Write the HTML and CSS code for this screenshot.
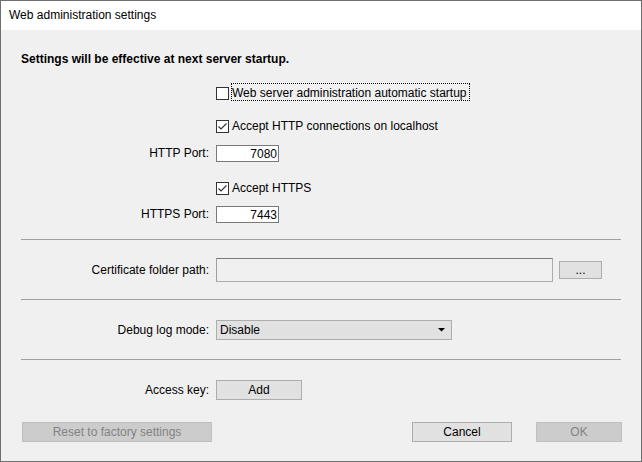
FILE: index.html
```html
<!DOCTYPE html>
<html lang="en">
<head>
<meta charset="utf-8">
<title>Web administration settings</title>
<link rel="stylesheet" href="styles.css">
</head>
<body>
<div class="window">
  <div class="titlebar">Web administration settings</div>
  <div class="content">
    <p class="notice">Settings will be effective at next server startup.</p>

    <div class="row check-row r-startup">
      <span></span>
      <label class="check"><span class="box"></span><span class="check-text focused">Web server administration automatic startup</span></label>
    </div>

    <div class="row check-row r-http">
      <span></span>
      <label class="check"><span class="box"><svg width="11" height="11" viewBox="0 0 11 11"><polyline points="1.5,5.5 4,8 9.5,2.5" fill="none" stroke="#333" stroke-width="1.2"/></svg></span><span class="check-text">Accept HTTP connections on localhost</span></label>
    </div>

    <div class="row field-row r-http-port">
      <span class="label">HTTP Port:</span>
      <input class="num" type="text" value="7080">
    </div>

    <div class="row check-row r-https">
      <span></span>
      <label class="check"><span class="box"><svg width="11" height="11" viewBox="0 0 11 11"><polyline points="1.5,5.5 4,8 9.5,2.5" fill="none" stroke="#333" stroke-width="1.2"/></svg></span><span class="check-text">Accept HTTPS</span></label>
    </div>

    <div class="row field-row r-https-port">
      <span class="label">HTTPS Port:</span>
      <input class="num" type="text" value="7443">
    </div>

    <hr class="sep s1">

    <div class="row r-cert">
      <span class="label">Certificate folder path:</span>
      <div class="path-group">
        <div class="path-input"></div>
        <button class="btn browse" type="button">...</button>
      </div>
    </div>

    <hr class="sep s2">

    <div class="row r-debug">
      <span class="label">Debug log mode:</span>
      <div class="select"><span>Disable</span><svg class="arrow" width="7" height="4" viewBox="0 0 7 4"><polygon points="0,0 7,0 3.5,3.6" fill="#000"/></svg></div>
    </div>

    <hr class="sep s3">

    <div class="row r-access">
      <span class="label">Access key:</span>
      <button class="btn add" type="button">Add</button>
    </div>

    <div class="footer">
      <button class="btn reset" type="button" disabled>Reset to factory settings</button>
      <button class="btn cancel" type="button">Cancel</button>
      <button class="btn ok" type="button" disabled>OK</button>
    </div>
  </div>
</div>
</body>
</html>
```
FILE: styles.css
```css
* { box-sizing: border-box; }
html, body { margin: 0; padding: 0; }
body {
  font: 12px/15px "Liberation Sans", Arial, sans-serif;
  color: #000;
  background: #f0f0f0;
}
.window {
  width: 642px;
  height: 462px;
  border: 1px solid #6f6f6f;
  background: #f0f0f0;
  display: flex;
  flex-direction: column;
}
.titlebar {
  flex: none;
  height: 29px;
  background: #fff;
  padding-left: 8px;
  display: flex;
  align-items: center;
}
.content {
  padding: 0 20px;
  display: flex;
  flex-direction: column;
}
.notice {
  margin: 22px 0 0;
  font-weight: bold;
  line-height: 15px;
}
.row {
  display: grid;
  grid-template-columns: 188px auto;
  column-gap: 7px;
  align-items: center;
  justify-items: start;
}
.label { justify-self: end; white-space: nowrap; }

.check-row { height: 15px; }
.check { display: flex; align-items: center; }
.box {
  width: 13px;
  height: 13px;
  border: 1px solid #333;
  background: #fff;
  display: flex;
}
.check-text { margin-left: 3px; position: relative; white-space: nowrap; }
.focused::before {
  content: "";
  position: absolute;
  left: -1px;
  top: -3px;
  right: -3px;
  bottom: 0;
  border: 1px dotted #000;
}

.r-startup { margin-top: 19px; }
.r-http { margin-top: 18px; }
.r-http-port { margin-top: 11px; height: 17px; }
.r-https { margin-top: 19px; }
.r-https-port { margin-top: 10px; height: 17px; }

.num {
  width: 63px;
  height: 17px;
  margin: 0;
  border: 1px solid #7a7a7a;
  background: #fff;
  font: inherit;
  color: #000;
  text-align: right;
  padding: 0 1px 0 2px;
  outline: none;
}

.sep {
  margin: 0;
  border: 0;
  height: 1px;
  background: #a0a0a0;
}
.s1 { margin-top: 16px; }
.s2 { margin-top: 17px; }
.s3 { margin-top: 19px; }

.r-cert { margin-top: 18px; height: 24px; }
.path-group { display: flex; align-items: center; gap: 6px; }
.path-input {
  width: 337px;
  height: 24px;
  background: #f0f0f0;
  border: 1px solid #adadad;
  border-top-color: #7a7a7a;
  border-left-color: #a0a0a0;
}

.btn {
  font: inherit;
  color: #000;
  background: #e1e1e1;
  border: 1px solid #adadad;
  border-radius: 0;
  padding: 0;
  height: 20px;
  line-height: 15px;
  margin: 0;
}
.btn:disabled {
  background: #cccccc;
  border-color: #bfbfbf;
  color: #838383;
}
.browse { width: 43px; height: 18px; line-height: 14px; }

.r-debug { margin-top: 20px; height: 20px; }
.select {
  width: 236px;
  height: 20px;
  background: #e1e1e1;
  border: 1px solid #adadad;
  padding-left: 3px;
  display: flex;
  align-items: center;
}
.arrow { margin-left: auto; margin-right: 6px; }

.r-access { margin-top: 20px; height: 20px; }
.add { width: 86px; }

.footer {
  margin-top: 22px;
  display: flex;
  align-items: center;
}
.reset { width: 190px; margin-left: 1px; }
.cancel { width: 100px; margin-left: auto; }
.ok { width: 86px; margin-left: 24px; margin-right: -1px; }
```
